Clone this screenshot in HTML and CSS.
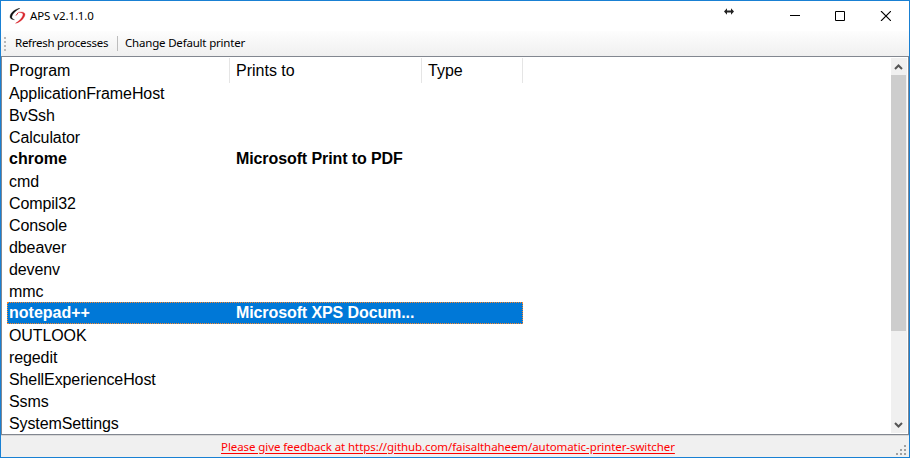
FILE: index.html
```html
<!DOCTYPE html>
<html lang="en">
<head>
<meta charset="utf-8">
<title>APS v2.1.1.0</title>
<link rel="stylesheet" href="styles.css">
</head>
<body>
<div class="window">
  <header class="titlebar">
    <svg class="logo" width="17" height="16" viewBox="0 0 17 16" fill="none">
      <path d="M11 .3C6.500 .8 1.500 4.500 1 8.500C.8 10.500 2.500 11.700 5.500 11.700C3.400 11 2.500 10 2.900 8.300C3.800 5.300 7 2.300 11 .3Z" fill="#111" stroke="#111" stroke-width=".3"/>
      <path d="M9.500 4.300C13 3.500 16.200 4.200 16 6.700C15.300 10.500 11 14.500 6.500 15.300C10 13.200 13.200 10 14 7C14.300 5.200 12.500 4.600 9.500 4.300Z" fill="#d8262c" stroke="#d8262c" stroke-width=".3"/>
      <path d="M9.300 4.500L7 7.500" stroke="#d8262c"/>
    </svg>
    <h1 class="title">APS v2.1.1.0</h1>
    <svg class="resize" width="10" height="7" viewBox="0 0 10 7"><path d="M0 3.500L3 .2V2.500H7V.2L10 3.500L7 6.800V4.500H3V6.800Z" fill="#222"/></svg>
    <div class="controls">
      <svg width="10" height="10" viewBox="0 0 10 10"><path d="M0 4.500H10" stroke="#000"/></svg>
      <svg width="10" height="10" viewBox="0 0 10 10"><path d="M.5 .5H9.500V9.500H.5Z" fill="none" stroke="#000"/></svg>
      <svg width="11" height="10" viewBox="0 0 11 10"><path d="M1 0L11 10M11 0L1 10" stroke="#000" stroke-width="1.100"/></svg>
    </div>
  </header>
  <nav class="toolbar">
    <span class="grip"></span>
    <span class="tool refresh">Refresh processes</span>
    <span class="separator"></span>
    <span class="tool change">Change Default printer</span>
  </nav>
  <main class="list">
    <div class="content">
      <div class="row head"><span>Program</span><span>Prints to</span><span>Type</span></div>
      <div class="row"><span>ApplicationFrameHost</span></div>
      <div class="row"><span>BvSsh</span></div>
      <div class="row"><span>Calculator</span></div>
      <div class="row bold"><span>chrome</span><span>Microsoft Print to PDF</span></div>
      <div class="row"><span>cmd</span></div>
      <div class="row"><span>Compil32</span></div>
      <div class="row"><span>Console</span></div>
      <div class="row"><span>dbeaver</span></div>
      <div class="row"><span>devenv</span></div>
      <div class="row"><span>mmc</span></div>
      <div class="row bold selected"><span>notepad++</span><span>Microsoft XPS Docum...</span></div>
      <div class="row"><span>OUTLOOK</span></div>
      <div class="row"><span>regedit</span></div>
      <div class="row"><span>ShellExperienceHost</span></div>
      <div class="row"><span>Ssms</span></div>
      <div class="row"><span>SystemSettings</span></div>
    </div>
    <div class="scrollbar">
      <svg width="15" height="17" viewBox="0 0 15 17"><path d="M4 11L7.500 7.500L11 11" fill="none" stroke="#555" stroke-width="2"/></svg>
      <div class="thumb"></div>
      <svg class="down" width="15" height="17" viewBox="0 0 15 17"><path d="M4 7L7.500 10.500L11 7" fill="none" stroke="#555" stroke-width="2"/></svg>
    </div>
  </main>
  <footer class="status">
    <span class="link">Please give feedback at https://github.com/faisalthaheem/automatic-printer-switcher</span>
    <svg class="sizer" width="10" height="10" viewBox="0 0 10 10"><path d="M8 0h2v2H8zM4 4h2v2H4zM8 4h2v2H8zM0 8h2v2H0zM4 8h2v2H4zM8 8h2v2H8z" fill="#a0a0a0"/></svg>
  </footer>
</div>
</body>
</html>
```
FILE: styles.css
```css
* { box-sizing: border-box; }
body { margin: 0; overflow: hidden; font-family: "Noto Sans", "Open Sans", sans-serif; font-size: 11.5px; color: #000; }
.window { width: 910px; height: 458px; border: 1px solid #1980d3; background: #fff; display: flex; flex-direction: column; }
svg { display: block; flex: none; }
.titlebar { height: 30px; display: flex; align-items: center; padding-left: 8px; }
.logo { margin-top: -1px; }
.title { margin: 0 0 0 4px; font-size: 11.5px; font-weight: 400; line-height: 30px; letter-spacing: -.1px; white-space: nowrap; }
.resize { margin: 0 0 9px auto; }
.controls { display: flex; gap: 35px; margin: 0 18px 0 56px; }
.toolbar { height: 25px; display: flex; align-items: center; background: linear-gradient(#fdfdfd, #f0f0f0); padding-left: 3px; white-space: nowrap; }
.grip { width: 2px; height: 14px; background: repeating-linear-gradient(#b8b8b8 0 2px, transparent 2px 4px); }
.tool { line-height: 23px; height: 25px; }
.refresh { margin-left: 9px; width: 102px; letter-spacing: -.27px; }
.separator { width: 1px; height: 15px; background: #bdbdbd; }
.change { margin-left: 7px; letter-spacing: -.19px; }
.list { height: 379px; display: flex; border: 1px solid #828790; padding: 1px; font-family: "Liberation Sans", Arial, sans-serif; font-size: 16px; }
.content { flex: 1; padding-left: 4px; }
.row { width: 516px; height: 22px; display: grid; grid-template-columns: 227px 192px 97px; line-height: 23px; letter-spacing: -.1px; white-space: nowrap; }
.row span { padding-left: 2px; }
.head { height: 24px; line-height: 25px; letter-spacing: 0; }
.head span { border-right: 1px solid #e5e5e5; }
.head span:first-child { margin-right: 4px; }
.head span:nth-child(2) { margin-left: -4px; padding-left: 6px; margin-right: 4px; }
.head span:nth-child(3) { margin-left: -4px; padding-left: 6px; }
.bold { font-weight: 700; line-height: 21px; letter-spacing: 0; }
.bold span:nth-child(2) { letter-spacing: -.1px; }
.selected { background: #0078d7; color: #fff; outline: 1px dotted #ff8728; outline-offset: -1px; }
.scrollbar { width: 16px; background: #f0f0f0; display: flex; flex-direction: column; }
.thumb { width: 15px; height: 256px; background: #cdcdcd; }
.down { margin-top: auto; }
.status { height: 22px; background: #f0f0f0; border-top: 1px solid #d8d8d8; display: flex; align-items: center; padding-left: 220px; }
.link { color: #f00; text-decoration: underline; text-underline-offset: 2px; line-height: 22px; white-space: nowrap; letter-spacing: -.08px; }
.sizer { margin: 6px 3px 0 auto; }
```
